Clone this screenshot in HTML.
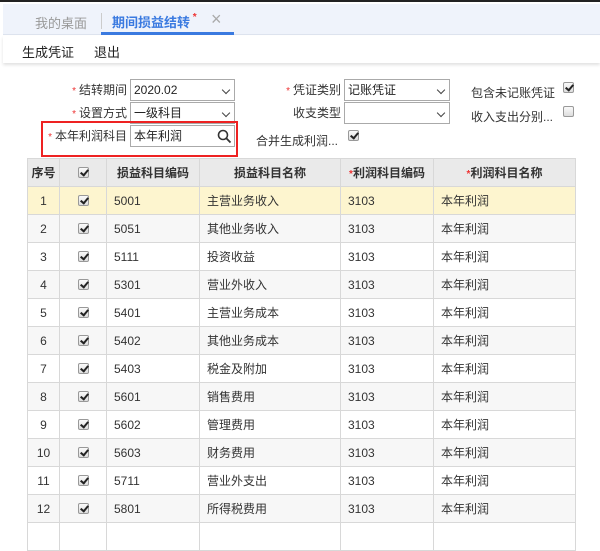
<!DOCTYPE html>
<html><head><meta charset="utf-8"><style>
*{margin:0;padding:0;box-sizing:border-box}
body{width:600px;height:531px;overflow:hidden;background:#fff;font-family:"Liberation Sans","Noto Sans CJK SC",sans-serif;font-size:12px;color:#333;position:relative}
.a{position:absolute}
.star{color:#e33;font-size:10px;margin-right:3px}
.lbl{position:absolute;text-align:right;font-size:12px;color:#333;line-height:22px}
.inp{position:absolute;border:1px solid #aaa;background:#fff;height:22px;line-height:20px;padding-left:3px;font-size:12px;color:#222}
.chev{position:absolute;right:5px;top:7px;width:6px;height:6px;border-right:1.6px solid #444;border-bottom:1.6px solid #444;transform:rotate(45deg)}
.cb{position:absolute;width:11px;height:11px;border:1px solid #999;border-radius:2px;background:linear-gradient(#fafafa,#ddd)}
.cb.on::after{content:"";position:absolute;left:3px;top:0px;width:3px;height:6px;border-right:2px solid #222;border-bottom:2px solid #222;transform:rotate(40deg)}
table{position:absolute;left:27px;top:158px;border-collapse:collapse;table-layout:fixed;width:548px}
td,th{border:1px solid #d8d8d8;height:28px;font-size:12px;padding:0 7px;text-align:left;font-weight:normal;position:relative}
th{background:#eaeaea;font-weight:bold;text-align:center;color:#333}
tr:nth-child(odd) td{background:#f7f7f7}
tr.sel td{background:#fdf5cf}
td.c{text-align:center}
td .cb,th .cb{left:18px;top:8px}
</style></head><body>
<div class="a" style="left:0;top:0;width:600px;height:2px;background:#222"></div>
<div class="a" style="left:3px;top:4px;width:597px;height:31px;background:#eff3fb;border-bottom:1px solid #dde3ee"></div>
<div class="a" style="left:35px;top:13px;color:#999;font-size:13px">我的桌面</div>
<div class="a" style="left:101px;top:13px;width:1px;height:16px;background:#ccc"></div>
<div class="a" style="left:112px;top:12px;color:#3a7ae0;font-size:13px;font-weight:bold">期间损益结转<span style="color:#e33;font-size:10px;vertical-align:top"> *</span></div>
<div class="a" style="left:211px;top:9px;color:#aaa;font-size:18px">×</div>
<div class="a" style="left:101px;top:32px;width:133px;height:3px;background:#3a7ae0"></div>
<div class="a" style="left:3px;top:36px;width:597px;height:27px;background:#fff;box-shadow:0 2px 3px rgba(0,0,0,.12)"></div>
<div class="a" style="left:22px;top:42px;font-size:13px;color:#222">生成凭证</div>
<div class="a" style="left:94px;top:42px;font-size:13px;color:#222">退出</div>

<div class="lbl" style="left:40px;width:87px;top:79px"><span class="star">*</span>结转期间</div>
<div class="inp" style="left:130px;top:79px;width:105px">2020.02<div class="chev"></div></div>
<div class="lbl" style="left:40px;width:87px;top:102px"><span class="star">*</span>设置方式</div>
<div class="inp" style="left:130px;top:102px;width:105px">一级科目<div class="chev"></div></div>
<div class="lbl" style="left:40px;width:87px;top:125px"><span class="star">*</span>本年利润科目</div>
<div class="inp" style="left:130px;top:125px;width:105px">本年利润
<svg class="a" style="right:2px;top:3px" width="15" height="15" viewBox="0 0 15 15"><circle cx="6" cy="6" r="4.5" fill="none" stroke="#333" stroke-width="1.6"/><path d="M9.3 9.3L13.5 13.5" stroke="#333" stroke-width="1.8"/></svg></div>
<div class="a" style="left:41px;top:121px;width:197px;height:36px;border:2px solid #ee2222"></div>

<div class="lbl" style="left:260px;width:81px;top:79px"><span class="star">*</span>凭证类别</div>
<div class="inp" style="left:344px;top:79px;width:106px">记账凭证<div class="chev"></div></div>
<div class="lbl" style="left:260px;width:81px;top:102px">收支类型</div>
<div class="inp" style="left:344px;top:102px;width:106px"><div class="chev"></div></div>
<div class="a" style="left:256px;top:132px;color:#333">合并生成利润...</div>
<div class="cb on" style="left:348px;top:130px"></div>
<div class="a" style="left:471px;top:84px;color:#333">包含未记账凭证</div>
<div class="cb on" style="left:563px;top:82px"></div>
<div class="a" style="left:471px;top:108px;color:#333">收入支出分别...</div>
<div class="cb" style="left:563px;top:106px"></div>

<table>
<colgroup><col style="width:32px"><col style="width:47px"><col style="width:93px"><col style="width:141px"><col style="width:93px"><col style="width:142px"></colgroup>
<tr><th style="padding:0">序号</th><th><span class="cb on"></span></th><th>损益科目编码</th><th>损益科目名称</th><th><span style="color:#e33;font-size:10px">*</span>利润科目编码</th><th><span style="color:#e33;font-size:10px">*</span>利润科目名称</th></tr>
<tr class="sel"><td class="c">1</td><td><span class="cb on"></span></td><td>5001</td><td>主营业务收入</td><td>3103</td><td>本年利润</td></tr>
<tr><td class="c">2</td><td><span class="cb on"></span></td><td>5051</td><td>其他业务收入</td><td>3103</td><td>本年利润</td></tr>
<tr><td class="c">3</td><td><span class="cb on"></span></td><td>5111</td><td>投资收益</td><td>3103</td><td>本年利润</td></tr>
<tr><td class="c">4</td><td><span class="cb on"></span></td><td>5301</td><td>营业外收入</td><td>3103</td><td>本年利润</td></tr>
<tr><td class="c">5</td><td><span class="cb on"></span></td><td>5401</td><td>主营业务成本</td><td>3103</td><td>本年利润</td></tr>
<tr><td class="c">6</td><td><span class="cb on"></span></td><td>5402</td><td>其他业务成本</td><td>3103</td><td>本年利润</td></tr>
<tr><td class="c">7</td><td><span class="cb on"></span></td><td>5403</td><td>税金及附加</td><td>3103</td><td>本年利润</td></tr>
<tr><td class="c">8</td><td><span class="cb on"></span></td><td>5601</td><td>销售费用</td><td>3103</td><td>本年利润</td></tr>
<tr><td class="c">9</td><td><span class="cb on"></span></td><td>5602</td><td>管理费用</td><td>3103</td><td>本年利润</td></tr>
<tr><td class="c">10</td><td><span class="cb on"></span></td><td>5603</td><td>财务费用</td><td>3103</td><td>本年利润</td></tr>
<tr><td class="c">11</td><td><span class="cb on"></span></td><td>5711</td><td>营业外支出</td><td>3103</td><td>本年利润</td></tr>
<tr><td class="c">12</td><td><span class="cb on"></span></td><td>5801</td><td>所得税费用</td><td>3103</td><td>本年利润</td></tr>
<tr><td></td><td></td><td></td><td></td><td></td><td></td></tr>
</table>
</body></html>
